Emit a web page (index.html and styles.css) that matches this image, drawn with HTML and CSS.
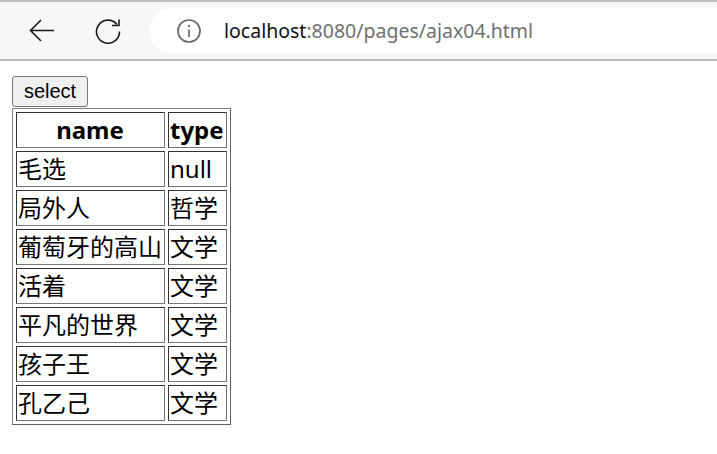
FILE: index.html
```html
<!DOCTYPE html>
<html lang="en">
<head>
    <meta charset="UTF-8">
    <title>ajax04</title>
    <link rel="stylesheet" href="styles.css">
</head>
<body>
    <div class="toolbar">
        <div class="nav-btn">
            <svg width="28" height="28" viewBox="0 0 28 28" fill="none" stroke="#1a1a1a" stroke-width="1.6">
                <path d="M2.5 13.5H26M13 3L2.5 13.5L13 24"/>
            </svg>
        </div>
        <div class="nav-btn">
            <svg width="28" height="28" viewBox="0 0 28 28" fill="none" stroke="#1a1a1a" stroke-width="1.6">
                <path d="M23 7.5A11.5 11.5 0 1 0 25.5 14.5"/>
                <path d="M25 2.5V8.5H18"/>
            </svg>
        </div>
        <div class="address">
            <svg class="info" width="26" height="26" viewBox="0 0 26 26" fill="none" stroke="#6a6a6a">
                <circle cx="13" cy="13" r="11" stroke-width="1.7"/>
                <path d="M13 11.5V19" stroke-width="1.7"/>
                <path d="M13 7V9" stroke-width="1.9"/>
            </svg>
            <span class="url"><span class="host">localhost</span>:8080/pages/ajax04.html</span>
        </div>
    </div>

    <div class="page">
        <button type="button">select</button>
        <table>
            <tr><th>name</th><th>type</th></tr>
            <tr><td>毛选</td><td>null</td></tr>
            <tr><td>局外人</td><td>哲学</td></tr>
            <tr><td>葡萄牙的高山</td><td>文学</td></tr>
            <tr><td>活着</td><td>文学</td></tr>
            <tr><td>平凡的世界</td><td>文学</td></tr>
            <tr><td>孩子王</td><td>文学</td></tr>
            <tr><td>孔乙己</td><td>文学</td></tr>
        </table>
    </div>
</body>
</html>
```

FILE: styles.css
```css
* {
    box-sizing: border-box;
}

body {
    margin: 0;
    background: white;
    color: black;
    font-family: "Noto Sans", "Noto Sans CJK SC", sans-serif;
}

.toolbar {
    display: flex;
    align-items: center;
    height: 61px;
    padding-left: 28px;
    background: #f7f7f7;
    border-top: 2px solid #bdbdbd;
    border-bottom: 2px solid #bdbdbd;
}

.nav-btn {
    display: flex;
    width: 66px;
    height: 28px;
}

.address {
    display: flex;
    align-items: center;
    flex: 1;
    height: 45px;
    margin-left: -10px;
    padding-left: 26px;
    background: white;
    border-radius: 22px 0 0 22px;
    color: #6f6f6f;
    font-size: 19.5px;
}

.info {
    margin-right: 22px;
}

.host {
    color: #111;
}

.page {
    padding: 15px 12px;
}

button {
    display: block;
    width: 76px;
    height: 31px;
    padding: 0;
    margin-bottom: 1px;
    background: #efefef;
    border: 1px solid #767676;
    border-radius: 3px;
    color: black;
    font-family: "Liberation Sans", sans-serif;
    font-size: 20px;
}

table {
    border: 1px solid;
    border-color: #808080 #606060 #606060 #808080;
    border-collapse: separate;
    border-spacing: 3px;
}

th,
td {
    height: 36px;
    padding: 0 2px 0 1px;
    border: 1px solid;
    border-color: #333 #777 #777 #333;
    font-size: 24px;
    line-height: 32px;
}

th {
    font-weight: 700;
    text-align: center;
}

td {
    text-align: left;
}
```
